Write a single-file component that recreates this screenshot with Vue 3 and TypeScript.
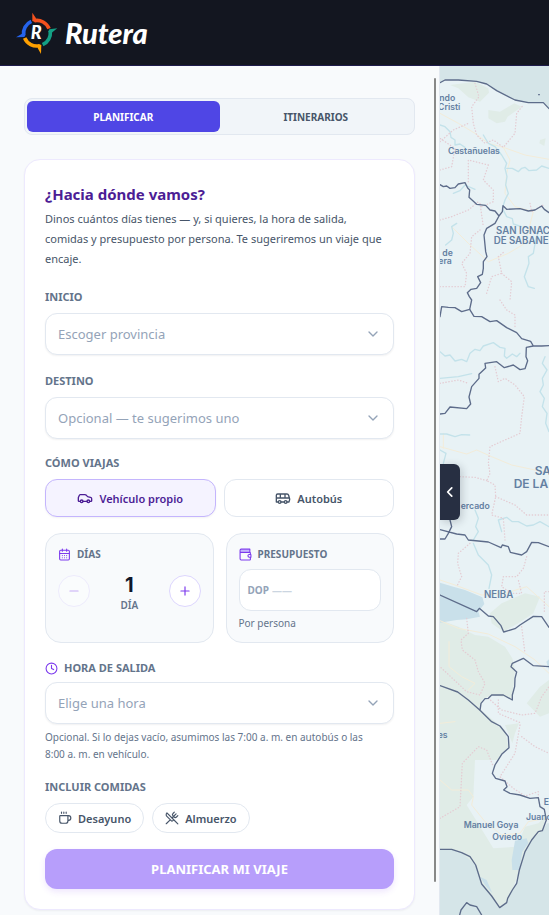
<script setup lang="ts">
import { ref } from 'vue'

type Transport = 'car' | 'bus'

const tab = ref<'plan' | 'trips'>('plan')
const transport = ref<Transport>('car')
const days = ref(1)
const budget = ref('')
const start = ref('')
const destination = ref('')
const hour = ref('')
const meals = ref<string[]>([])

const provinces = ['Monte Cristi', 'Bahoruco', 'San Juan', 'Pedernales']
const hours = ['7:00 a. m.', '8:00 a. m.', '9:00 a. m.']

function toggleMeal(meal: string) {
  meals.value = meals.value.includes(meal)
    ? meals.value.filter((m) => m !== meal)
    : [...meals.value, meal]
}
</script>

<template>
  <div class="page">
    <header class="topbar">
      <a class="brand" href="#" aria-label="Rutera">
        <svg class="compass" viewBox="0 0 126 126" aria-hidden="true">
          <g fill="none" stroke-width="11">
            <path d="M55 26A39 39 0 0 1 99 50" stroke="#f4511e" />
            <path d="M103 58A40 40 0 0 1 80 98" stroke="#14a085" />
            <path d="M71 101A39 39 0 0 1 26 78" stroke="#ffa000" />
            <path d="M23 70A39 39 0 0 1 46 28" stroke="#2563eb" />
          </g>
          <path d="M49 2L60 19L58 31L49 27Z" fill="#f4511e" />
          <path d="M124 49L107 62L96 60L100 52Z" fill="#14a085" />
          <path d="M75 126L65 108L68 96L76 99Z" fill="#ffa000" />
          <path d="M0 76L18 65L29 68L25 75Z" fill="#2563eb" />
          <text x="61" y="82" text-anchor="middle" class="compass-letter">R</text>
        </svg>
        <span class="brand-name">Rutera</span>
      </a>
    </header>

    <main class="workspace">
      <aside class="sidebar">
        <div class="scroller">
          <nav class="tabs">
            <button type="button" :class="{ active: tab === 'plan' }" @click="tab = 'plan'">PLANIFICAR</button>
            <button type="button" :class="{ active: tab === 'trips' }" @click="tab = 'trips'">ITINERARIOS</button>
          </nav>

          <form class="card" @submit.prevent>
            <h1>¿Hacia dónde vamos?</h1>
            <p class="intro">
              Dinos cuántos días tienes — y, si quieres, la hora de salida, comidas y presupuesto por persona. Te
              sugeriremos un viaje que encaje.
            </p>

            <div class="field">
              <label class="label" for="start">INICIO</label>
              <div class="select">
                <select id="start" v-model="start">
                  <option value="">Escoger provincia</option>
                  <option v-for="p in provinces" :key="p">{{ p }}</option>
                </select>
                <svg class="chevron" viewBox="0 0 24 24" aria-hidden="true"><path d="M6 9l6 6 6-6" /></svg>
              </div>
            </div>

            <div class="field">
              <label class="label" for="destination">DESTINO</label>
              <div class="select">
                <select id="destination" v-model="destination">
                  <option value="">Opcional — te sugerimos uno</option>
                  <option v-for="p in provinces" :key="p">{{ p }}</option>
                </select>
                <svg class="chevron" viewBox="0 0 24 24" aria-hidden="true"><path d="M6 9l6 6 6-6" /></svg>
              </div>
            </div>

            <div class="group" role="group" aria-labelledby="mode-label">
              <span id="mode-label" class="label">CÓMO VIAJAS</span>
              <div class="modes">
                <button type="button" :class="{ active: transport === 'car' }" @click="transport = 'car'">
                  <svg class="icon-m" viewBox="0 0 24 24" aria-hidden="true">
                    <path d="M19 17h2c.6 0 1-.4 1-1v-3c0-.9-.7-1.7-1.5-1.9C18.7 10.6 16 10 16 10s-1.3-1.4-2.2-2.3c-.5-.4-1.1-.7-1.8-.7H5c-.6 0-1.1.4-1.4.9l-1.4 2.9A3.7 3.7 0 0 0 2 12v4c0 .6.4 1 1 1h2M9 17h6" />
                    <circle cx="7" cy="17" r="2" /><circle cx="17" cy="17" r="2" />
                  </svg>
                  Vehículo propio
                </button>
                <button type="button" :class="{ active: transport === 'bus' }" @click="transport = 'bus'">
                  <svg class="icon-m" viewBox="0 0 24 24" aria-hidden="true">
                    <path d="M8 6v6M15 6v6M2 12h19.6M18 18h3s.5-1.7.8-2.8c.1-.4.2-.8.2-1.2 0-.4-.1-.8-.2-1.2l-1.4-5C20.1 6.8 19.1 6 18 6H4a2 2 0 0 0-2 2v10h3M9 18h5" />
                    <circle cx="7" cy="18" r="2" /><circle cx="16" cy="18" r="2" />
                  </svg>
                  Autobús
                </button>
              </div>
            </div>

            <div class="panels">
              <section class="panel">
                <h2 class="panel-title">
                  <svg class="icon-s" viewBox="0 0 24 24" aria-hidden="true">
                    <path d="M8 2v4M16 2v4M3 10h18M8 14h.01M12 14h.01M16 14h.01M8 18h.01M12 18h.01M16 18h.01" />
                    <rect x="3" y="4" width="18" height="18" rx="2" />
                  </svg>
                  DÍAS
                </h2>
                <div class="stepper">
                  <button type="button" aria-label="Menos días" :disabled="days <= 1" @click="days--">
                    <svg viewBox="0 0 24 24" aria-hidden="true"><path d="M5 12h14" /></svg>
                  </button>
                  <div class="count">
                    <strong>{{ days }}</strong>
                    <span>{{ days === 1 ? 'DÍA' : 'DÍAS' }}</span>
                  </div>
                  <button type="button" aria-label="Más días" @click="days++">
                    <svg viewBox="0 0 24 24" aria-hidden="true"><path d="M5 12h14M12 5v14" /></svg>
                  </button>
                </div>
              </section>

              <section class="panel">
                <label class="panel-title" for="budget">
                  <svg class="icon-s" viewBox="0 0 24 24" aria-hidden="true">
                    <path d="M3 5h17" stroke="#c4b5fd" stroke-width="4" stroke-linecap="butt" />
                    <path d="M20 8V2H4a2 2 0 0 0-2 2v16a2 2 0 0 0 2 2h16a1 1 0 0 0 1-1v-4M3 8h17a1 1 0 0 1 1 1v3M22 12h-3a2 2 0 0 0 0 5h3z" />
                  </svg>
                  PRESUPUESTO
                </label>
                <div class="money">
                  <span>DOP</span>
                  <input id="budget" v-model="budget" type="text" inputmode="numeric" placeholder="——" />
                </div>
                <p class="per">Por persona</p>
              </section>
            </div>

            <div class="field time">
              <label class="label" for="hour">
                <svg class="icon-s" viewBox="0 0 24 24" aria-hidden="true">
                  <circle cx="12" cy="12" r="10" /><path d="M12 6v6l4 2" />
                </svg>
                HORA DE SALIDA
              </label>
              <div class="select">
                <select id="hour" v-model="hour">
                  <option value="">Elige una hora</option>
                  <option v-for="h in hours" :key="h">{{ h }}</option>
                </select>
                <svg class="chevron" viewBox="0 0 24 24" aria-hidden="true"><path d="M6 9l6 6 6-6" /></svg>
              </div>
              <p class="hint">
                Opcional. Si lo dejas vacío, asumimos las 7:00 a. m. en autobús o las 8:00 a. m. en vehículo.
              </p>
            </div>

            <div class="group" role="group" aria-labelledby="meal-label">
              <span id="meal-label" class="label">INCLUIR COMIDAS</span>
              <div class="chips">
                <button type="button" :aria-pressed="meals.includes('d')" @click="toggleMeal('d')">
                  <svg viewBox="0 0 24 24" aria-hidden="true">
                    <path d="M10 2v2M14 2v2M6 2v2M16 8a1 1 0 0 1 1 1v8a4 4 0 0 1-4 4H7a4 4 0 0 1-4-4V9a1 1 0 0 1 1-1h14a4 4 0 1 1 0 8h-1" />
                  </svg>
                  Desayuno
                </button>
                <button type="button" :aria-pressed="meals.includes('a')" @click="toggleMeal('a')">
                  <svg viewBox="0 0 24 24" aria-hidden="true">
                    <path d="M16 2l-2.3 2.3a3 3 0 0 0 0 4.2l1.8 1.8a3 3 0 0 0 4.2 0L22 8M15 15L3.3 3.3a4.2 4.2 0 0 0 0 6l7.3 7.3c.7.7 2 .7 2.8 0L15 15zM15 15l7 7M2.1 21.8l6.4-6.3M19 5l-7 7" />
                  </svg>
                  Almuerzo
                </button>
              </div>
            </div>

            <button class="submit" type="submit" disabled>PLANIFICAR MI VIAJE</button>
          </form>
        </div>
        <div class="track" aria-hidden="true"><div class="thumb"></div></div>
      </aside>

      <section class="map" aria-label="Mapa">
        <svg class="map-art" viewBox="45 18 327 2547" preserveAspectRatio="xMinYMin slice">
          <rect x="45" y="18" width="2000" height="2547" fill="#d5e5e8" />
          <path
            fill="#e8f2f5"
            d="M45 68L60 60L100 60L155 64L185 72L215 92L270 120L310 128L355 128L372 146L2045 200V2290H366L352 2312L340 2315L320 2340L300 2375L283 2430L275 2470L262 2490L248 2515L245 2528L224 2543L200 2508L170 2472L152 2415L135 2390L110 2378L80 2368L45 2368Z"
          />
          <g fill="#e0ece7">
            <path d="M75 75L150 65L190 85L192 98L165 125L130 112L100 85ZM190 150L225 155L268 130L290 140L248 170L240 185L215 190L190 175ZM345 240L362 235L358 258L343 250Z" />
            <path d="M195 1660L230 1630L300 1600L345 1610L325 1660L280 1690L235 1715L200 1690Z" />
            <path d="M45 1680L100 1700L150 1725L190 1730L240 1760L262 1795L270 1830L262 1915L200 1905L170 1920L168 1950L240 2010L250 2060L215 2100L150 2100L145 2210L125 2235L205 2365L275 2360L300 2300L340 2290L362 2270L352 2312L320 2340L300 2375L283 2430L262 2490L245 2528L224 2543L170 2472L152 2415L110 2378L80 2368L45 2368Z" />
            <path d="M345 1880L372 1860V1960L345 1970L305 1930ZM240 1995L282 1990L270 2020L262 2050Z" />
          </g>
          <g fill="#c9e0ea">
            <path d="M45 1568L85 1580L120 1590L172 1612L178 1632L160 1655L165 1670L125 1678L95 1680L45 1688Z" />
            <path d="M270 2342L305 2335L310 2350L292 2375L283 2430L262 2430L260 2400ZM165 2450L185 2460L202 2500L180 2475ZM364 1805L372 1798V1830Z" />
          </g>
          <g class="road">
            <path d="M45 160L100 190L150 220L190 250L235 262L300 285L372 298M235 262L255 300L245 340L240 400L270 440L325 455L300 550L250 580L190 605L130 550L80 500" />
            <path d="M45 1160L125 1182L155 1170L200 1190L260 1215L330 1230L372 1235M55 1120V1165" />
            <path d="M45 1560L90 1575L170 1605L240 1600L305 1580L372 1640M45 1682L100 1705L190 1722L270 1760L330 1800L372 1840M72 1745V1820L110 1850L150 1870L130 1890M45 1990L90 1985M45 2160L80 2190L130 2190L145 2210L140 2235L180 2285L230 2325L285 2320L310 2285L362 2275" />
          </g>
          <g class="river">
            <path d="M45 195L60 200L75 215L78 232L90 240V255L105 252L120 262M175 225L190 250L210 260L230 285L245 310L240 325L246 350L242 375L250 400L240 420L232 445L245 470L262 476L265 492L290 500M245 325L262 325L280 335L290 325L300 322L312 332L335 330L350 318L372 325M95 490L80 500L85 520L80 540L62 555M340 515L332 540L325 580L310 590L312 610L298 650L310 680L328 685M85 400L105 392L120 375L150 388" />
            <path d="M45 875L60 888L75 885L90 903L110 898L125 905L135 880L150 868L165 872L175 858L205 848L225 862L240 865L238 888L245 895L262 882L275 890L285 880M45 955L100 950L140 941M45 1122L65 1122L90 1130L110 1124L134 1125M45 1170L63 1180L55 1210M360 890L352 910L366 930L352 955L355 975L345 995L358 1015L352 1040L366 1060L362 1090L372 1115" />
            <path d="M145 1450L160 1485L190 1515L200 1545L192 1585M150 1350L160 1375L152 1400L160 1415L145 1440M230 1415L220 1380L245 1372L262 1385L280 1385L305 1398L325 1395L345 1385L372 1400" />
          </g>
          <g class="limit">
            <path d="M150 70L162 110L140 140L145 190L155 225L180 250L205 240L235 262L270 220L275 160L295 135M45 245L85 210L130 190M45 330L80 320L90 265L45 235M190 315L175 360L205 390L205 425L170 440M190 315L130 300V370M45 480L80 470L130 450L160 425M45 680L120 680L125 640L110 610L135 580L140 530L165 510M165 430L175 500M185 700L200 650L230 640L220 590L238 575M230 640L260 665L255 720M315 430L320 455L355 435" />
            <path d="M225 720L245 750L270 765L270 800M210 920L220 965L240 955L270 975L298 1010L290 1070L285 1120L240 1140L195 1160L190 1210L195 1240L185 1262L210 1275L212 1310L200 1365L235 1375L240 1440M105 1250L150 1252L185 1262M212 1310L270 1335L305 1365L372 1365M45 970L100 960L130 970" />
            <path d="M135 1450L100 1480L98 1510L110 1550L95 1580M305 1490L295 1525L275 1550H235L230 1580L260 1600L290 1600L280 1560M125 1675L130 1720L108 1740L112 1770L150 1800L160 1835L180 1870L165 1905L125 1895L45 1820M290 1700L300 1780M190 1915L230 1950L290 1965L330 1960L350 1910L372 1880M220 1920V1960L290 1990M372 1595H358V1660" />
            <path d="M45 2275L105 2240L112 2110L160 2060L185 2070L205 2120M285 1995L270 2080L225 2150L265 2185L300 2208L340 2195L340 2215M290 2030L330 2060L372 2080" />
          </g>
          <g class="border">
            <path d="M45 68L60 60L100 60L155 64L185 72L215 92L270 120L310 128L355 128L372 146M341 104h2M45 374L55 380L65 378L75 385L90 383L100 372L120 368L128 384L134 390L132 412L155 433L182 436L195 450L210 453L222 468L232 455L234 437L245 448L285 446L310 453L330 450L350 438L358 448L372 458M222 468L210 490L185 505L177 525L182 575L186 590L175 605V625L172 643L158 650L167 668L155 685L138 688L127 698L133 710L140 720L134 748L110 755L90 743L70 742L50 740L45 770" />
            <path d="M134 748L147 769L170 770L195 785L215 782L245 803L275 818L290 836L317 844L325 858L350 858L372 857M325 858L304 862L303 890L308 902L300 926L285 929L265 915L238 923L215 905L180 910L182 924L162 943V955L140 980L132 1011L137 1032L125 1046L75 1041L60 1060L45 1062" />
            <path d="M75 1380L80 1400L70 1420L60 1437H45M45 1409L95 1422L120 1425L130 1440L190 1446L228 1463L232 1455L250 1460L256 1477L290 1485L305 1475L320 1447L340 1448L372 1460M45 1605L155 1655L163 1645L190 1668L205 1670L228 1697L236 1716L270 1706L285 1695L325 1669L350 1670L372 1702" />
            <path d="M45 1877L98 1896L130 1920L165 1951L200 1985L225 1998L250 2030L252 2063L230 2083L210 2115L202 2140L212 2155L240 2163L246 2180L236 2190L255 2200L285 2205L315 2215L340 2213L345 2240L358 2248L364 2280L352 2312L340 2315L320 2340L300 2375L283 2430L275 2470L262 2490L248 2515L245 2528L224 2543L200 2508L170 2472L152 2415L135 2390L110 2378L80 2368L45 2368M165 1951L168 1930L180 1916L190 1915L200 1905L235 1905L262 1920L262 1905L269 1880L270 1855L275 1836L258 1820L262 1810L295 1795L325 1817L372 1820M104 2565L108 2550L125 2528L135 2535L155 2540L170 2565" />
          </g>
          <g class="place">
            <text x="43" y="123">ndo</text><text x="39" y="150">Cristi</text>
            <text x="69" y="281">Castañuelas</text>
            <text x="52" y="587">de</text><text x="40" y="612">era</text>
            <text x="107" y="1347">ercado</text>
            <text x="38" y="2034">es</text>
            <text x="116" y="2303">Manuel Goya</text><text x="202" y="2341">Oviedo</text>
            <text x="356" y="2235">E</text><text x="303" y="2279">Juancho</text>
          </g>
          <g class="town">
            <text x="213" y="523">SAN IGNACIO</text><text x="206" y="553">DE SABANETA</text>
            <text x="177" y="1613">NEIBA</text>
          </g>
          <g class="city">
            <text x="329" y="1245">SAN JUAN</text><text x="266" y="1285">DE LA MAGUANA</text>
          </g>
        </svg>
        <button class="collapse" type="button" aria-label="Ocultar panel">
          <svg viewBox="0 0 24 24" aria-hidden="true"><path d="M15 5l-7 7 7 7" /></svg>
        </button>
      </section>
    </main>
  </div>
</template>

<style>
body {
  background: #f8fafc;
}
</style>

<style scoped>
* {
  box-sizing: border-box;
}
.page {
  display: flex;
  flex-direction: column;
  height: 100vh;
  font-family: 'Noto Sans', 'Open Sans', sans-serif;
  color: #475569;
}
button,
input,
select {
  font-family: inherit;
  color: inherit;
  margin: 0;
}
button {
  cursor: pointer;
}
svg {
  fill: none;
  stroke-linecap: round;
  stroke-linejoin: round;
  flex: none;
}
.topbar {
  flex: none;
  display: flex;
  align-items: center;
  height: 66px;
  padding: 0 16px;
  background: #131620;
  border-bottom: 1px solid #1e1b4b;
}
.brand {
  display: flex;
  align-items: center;
  gap: 7px;
  color: #fff;
  text-decoration: none;
}
.compass {
  width: 42px;
  height: 42px;
  stroke-linecap: butt;
}
.compass-letter {
  font: italic 900 54px Lato, sans-serif;
  fill: #fff;
}
.brand-name {
  font: italic 900 29px/36px Lato, sans-serif;
}
.workspace {
  flex: 1;
  min-height: 0;
  display: flex;
}
.sidebar {
  position: relative;
  flex: none;
  width: 440px;
  max-width: 85%;
  background: #f8fafc;
  border-right: 1px solid #e2e8f0;
}
.scroller {
  height: 100%;
  overflow-y: auto;
  scrollbar-width: none;
  padding: 32px 24px;
}
.track {
  position: absolute;
  top: 12px;
  bottom: 12px;
  right: 3px;
  width: 2px;
}
.thumb {
  height: calc(100% - 21px);
  border-radius: 1px;
  background: #888;
}
.tabs {
  display: flex;
  padding: 2px;
  border: 1px solid #e2e8f0;
  border-radius: 8px;
  background: #f1f5f9;
  margin-bottom: 24px;
}
.tabs button {
  flex: 1;
  height: 31px;
  border: 0;
  border-radius: 6px;
  background: transparent;
  font-size: 10px;
  font-weight: 700;
}
.tabs button.active {
  background: #4f46e5;
  color: #fff;
}
.card {
  padding: 20px;
  border: 1px solid #ede9fe;
  border-radius: 16px;
  background: #fff;
  box-shadow: 0 1px 2px rgba(15, 23, 42, 0.05);
}
h1 {
  margin: 0;
  font-size: 15px;
  line-height: 28px;
  font-weight: 700;
  color: #4c1d95;
}
.intro {
  margin: 1px 0 20px;
  padding-right: 4px;
  font-size: 11px;
  line-height: 20px;
}
.field {
  margin-bottom: 18px;
}
.field + .group {
  margin-top: -2px;
}
.group {
  margin-bottom: 16px;
}
.label,
.panel-title {
  display: flex;
  align-items: center;
  gap: 6px;
  margin: 0 0 8px;
  font-size: 11px;
  line-height: 16px;
  font-weight: 700;
  color: #64748b;
}
.select {
  position: relative;
}
.select select {
  display: block;
  appearance: none;
  width: 100%;
  height: 42px;
  padding: 0 40px 0 12px;
  border: 1px solid #e2e8f0;
  border-radius: 12px;
  background: #fff;
  box-shadow: 0 1px 2px rgba(15, 23, 42, 0.06);
  font-size: 13px;
  color: #94a3b8;
}
.chevron {
  position: absolute;
  top: 13px;
  right: 13px;
  width: 16px;
  height: 16px;
  stroke: #94a3b8;
  stroke-width: 2;
  pointer-events: none;
}
.modes {
  display: grid;
  grid-template-columns: minmax(0, 1fr) minmax(0, 1fr);
  gap: 8px;
}
.modes button,
.chips button {
  display: flex;
  align-items: center;
  justify-content: center;
  gap: 6px;
  height: 38px;
  border: 1px solid #e2e8f0;
  border-radius: 12px;
  background: #fff;
  font-size: 11px;
  font-weight: 600;
}
.modes button.active {
  border-color: #c4b5fd;
  background: #f5f3ff;
  color: #4c1d95;
  box-shadow: 0 1px 2px rgba(15, 23, 42, 0.05);
}
.icon-m {
  width: 16px;
  height: 16px;
  stroke: currentColor;
  stroke-width: 2;
}
.icon-s {
  width: 13px;
  height: 13px;
  stroke: #7c3aed;
  stroke-width: 2;
}
.panels {
  display: grid;
  grid-template-columns: minmax(0, 1fr) minmax(0, 1fr);
  gap: 12px;
  margin-bottom: 17px;
}
.panel {
  height: 110px;
  padding: 12px;
  border: 1px solid #e2e8f0;
  border-radius: 16px;
  background: #f8fafc;
}
.panel-title {
  margin: 0 0 7px;
  font-size: 10px;
}
.stepper {
  display: flex;
  align-items: center;
  justify-content: space-between;
  height: 44px;
}
.stepper button {
  display: grid;
  place-items: center;
  width: 32px;
  height: 32px;
  padding: 0;
  border: 1px solid #ddd6fe;
  border-radius: 50%;
  background: #fff;
}
.stepper button:disabled {
  opacity: 0.4;
}
.stepper svg {
  width: 14px;
  height: 14px;
  stroke: #7c3aed;
  stroke-width: 2;
}
.count {
  display: flex;
  flex-direction: column;
  align-items: center;
  gap: 2px;
  padding-top: 6px;
}
.count strong {
  font: 700 20px/20px Inter, sans-serif;
  color: #0f172a;
}
.count span {
  font-size: 10px;
  line-height: 16px;
  font-weight: 600;
  color: #64748b;
}
.money {
  display: flex;
  align-items: center;
  gap: 3px;
  height: 42px;
  padding: 0 8px;
  border: 1px solid #e2e8f0;
  border-radius: 12px;
  background: #fff;
}
.money span {
  font-size: 10px;
  font-weight: 700;
  color: #94a3b8;
}
.money input {
  flex: 1;
  min-width: 0;
  padding: 0;
  border: 0;
  background: transparent;
  font-size: 10px;
  font-weight: 700;
  color: #334155;
}
.money input::placeholder {
  color: #cbd5e1;
  opacity: 1;
}
.per {
  margin: 4px 0 0;
  font-size: 10px;
  line-height: 16px;
  color: #64748b;
}
.time .label {
  margin-bottom: 6px;
}
.hint {
  margin: 5px 0 0;
  padding-right: 12px;
  font-size: 10px;
  line-height: 17px;
  color: #64748b;
}
.chips {
  display: flex;
  gap: 8px;
}
.chips button {
  height: 30px;
  padding: 0 12px;
  border-radius: 15px;
}
.chips svg {
  width: 14px;
  height: 14px;
  stroke: currentColor;
  stroke-width: 2;
}
.submit {
  display: block;
  width: 100%;
  height: 40px;
  border: 0;
  border-radius: 12px;
  background: #b79efb;
  color: #fff;
  font-size: 13px;
  font-weight: 700;
  box-shadow: 0 3px 6px rgba(124, 58, 237, 0.12);
}
.map {
  position: relative;
  flex: 1;
  min-width: 0;
  overflow: hidden;
  background: #d5e5e8;
}
.map-art {
  display: block;
  width: 100%;
  height: 100%;
}
.road {
  stroke: #f3ecd9;
  stroke-width: 3;
}
.river {
  stroke: #c3e2ea;
  stroke-width: 4;
}
.limit {
  stroke: #e4ccd3;
  stroke-width: 4;
  stroke-dasharray: 1 8;
}
.border {
  stroke: #5d6c8a;
  stroke-width: 4;
}
.map text {
  font-family: Inter, sans-serif;
  font-weight: 600;
  fill: #6480a2;
}
.map .place {
  font-size: 26px;
}
.map .town {
  font-size: 29px;
}
.map .city {
  font-size: 36px;
}
.collapse {
  position: absolute;
  left: 0;
  top: 398px;
  display: grid;
  place-items: center;
  width: 20px;
  height: 56px;
  padding: 0;
  border: 0;
  border-radius: 0 6px 6px 0;
  background: #272f42;
  box-shadow: 2px 2px 8px rgba(15, 23, 42, 0.2);
}
.collapse svg {
  width: 14px;
  height: 14px;
  stroke: #fff;
  stroke-width: 3;
}
</style>
